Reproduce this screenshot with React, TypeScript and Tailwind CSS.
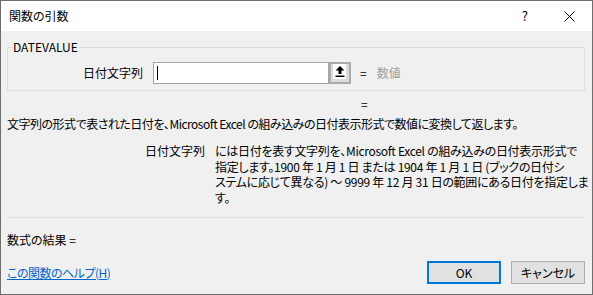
export default function App() {
  return (
    <div className="w-[593px] h-[295px] border border-[#6e6e6e] flex flex-col bg-[#f0f0f0] text-black text-[12px] font-['Noto_Sans_CJK_JP',sans-serif] [font-feature-settings:'palt']">
      {/* title bar */}
      <div className="h-[30px] bg-white flex items-center pl-[8px] pr-[17px] shrink-0">
        <span className="leading-[16px]">関数の引数</span>
        <span className="ml-auto leading-[16px] text-[13px]">?</span>
        <svg className="ml-[36px]" width="11" height="11" viewBox="0 0 11 11">
          <path d="M0.5 0.5 L10.5 10.5 M10.5 0.5 L0.5 10.5" stroke="#000" strokeWidth="1" fill="none" />
        </svg>
      </div>

      {/* body */}
      <div className="flex-1 flex flex-col px-[6px]">
        <fieldset className="mt-[8px] mr-[1px] border border-[#dcdcdc]">
          <legend className="ml-[4px] px-[1px] leading-[16px]">DATEVALUE</legend>
          <div className="flex items-center pt-[7px] pb-[6px]">
            <div className="w-[135px] text-right leading-[16px]">日付文字列</div>
            <div className="ml-[10px] w-[176px] h-[22px] border border-[#a5a5a5] bg-white flex items-center">
              <span className="ml-[3px] w-[1px] h-[14px] bg-black" />
            </div>
            <div className="w-[22px] h-[22px] border-2 border-[#ababab] bg-[#dcdcdc] flex items-start pl-[2px]">
              <div className="w-[13px] h-[15px] bg-white flex items-center justify-center">
                <svg width="10" height="11" viewBox="0 0 10 11">
                  <path d="M5 0 L9.5 4.5 L6.5 4.5 L6.5 8 L3.5 8 L3.5 4.5 L0.5 4.5 Z" fill="#000" />
                  <rect x="0.5" y="9.5" width="9" height="1.5" fill="#000" />
                </svg>
              </div>
            </div>
            <span className="ml-[9px] leading-[16px]">=</span>
            <span className="ml-[10px] leading-[16px] text-[#a0a0a0]">数値</span>
          </div>
        </fieldset>

        <div className="mt-[5px] pl-[354px] leading-[16px]">=</div>

        <div className="mt-[4px] leading-[16px] whitespace-nowrap tracking-[-0.5px]">
          文字列の形式で表された日付を、Microsoft Excel の組み込みの日付表示形式で数値に変換して返します。
        </div>

        <div className="mt-[11px] pl-[138px] flex leading-[15.5px]">
          <div className="w-[70px] shrink-0">日付文字列</div>
          <div className="whitespace-nowrap tracking-[-0.3px]">
            <div>には日付を表す文字列を、Microsoft Excel の組み込みの日付表示形式で</div>
            <div>指定します。1900 年 1 月 1 日 または 1904 年 1 月 1 日 (ブックの日付シ</div>
            <div>ステムに応じて異なる) ～ 9999 年 12 月 31 日の範囲にある日付を指定しま</div>
            <div>す。</div>
          </div>
        </div>

        <div className="mt-[12px] mr-[1px] border-t border-[#dcdcdc]" />

        <div className="mt-[14px] leading-[16px]">数式の結果 =</div>

        <div className="mt-[13px] mr-[1px] flex items-center">
          <a href="#" className="text-[#0066cc] underline leading-[16px] tracking-[-0.5px]">この関数のヘルプ(H)</a>
          <button className="ml-auto w-[74px] h-[23px] border-2 border-[#0078d7] bg-[#e1e1e1] leading-[16px]">OK</button>
          <button className="ml-[10px] w-[74px] h-[23px] border border-[#adadad] bg-[#e1e1e1] leading-[16px]">キャンセル</button>
        </div>
      </div>
    </div>
  );
}
